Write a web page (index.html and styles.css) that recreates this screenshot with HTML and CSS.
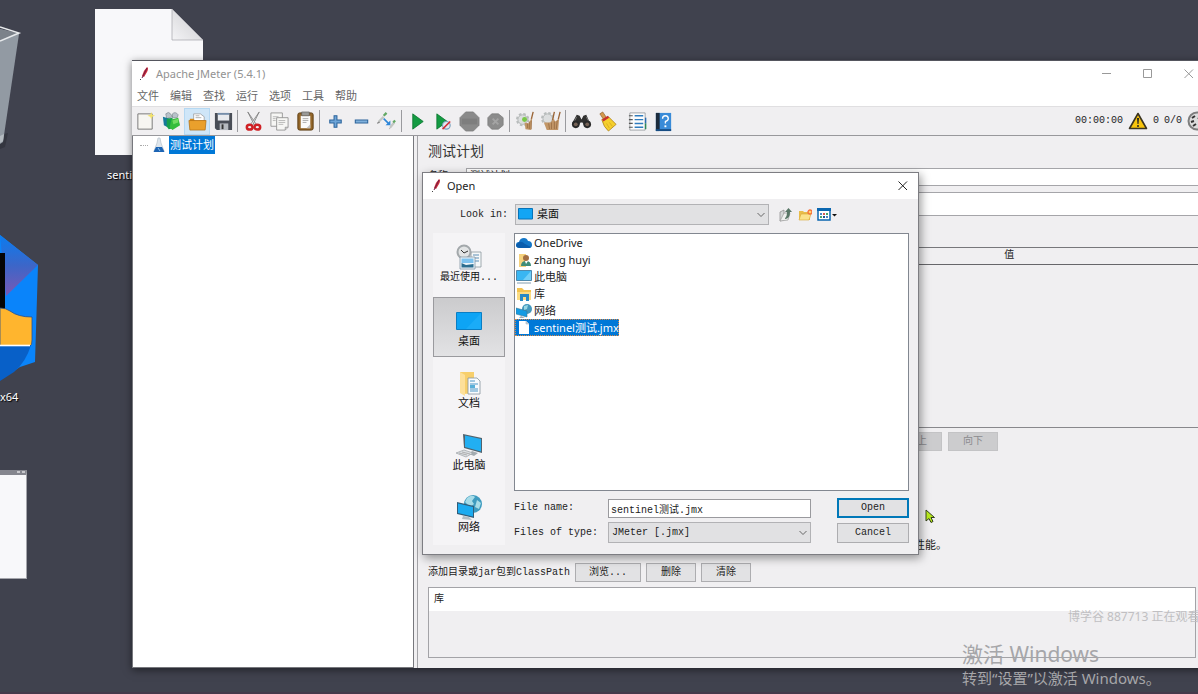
FILE: index.html
```html
<!DOCTYPE html>
<html lang="zh-CN">
<head>
    <meta charset="UTF-8">
    <meta name="viewport" content="width=device-width, initial-scale=1.0">
    <title>Apache JMeter (5.4.1)</title>
    <link rel="stylesheet" href="styles.css">
</head>
<body>
    <div class="desktop">
        <!-- Desktop icons -->
        <svg class="desk-bin" width="24" height="125" viewBox="0 0 24 125">
            <path d="M0 110L8 108 5 122 0 124Z" fill="#343640"/>
            <path d="M0 4L19 9 3 117 0 119Z" fill="#929aa3"/>
            <path d="M0 4L18 8 0 16Z" fill="#7c828a"/>
            <path d="M0 2L19 8 0 16" fill="none" stroke="#e8eaec" stroke-width="1.5"/>
            <path d="M0 111L4 109 3 116 0 118Z" fill="#b4bac0"/>
        </svg>
        <div class="desk-file">
            <svg width="108" height="146" viewBox="0 0 108 146">
                <defs>
                    <linearGradient id="fold" x1="0" y1="1" x2="1" y2="0"><stop offset="0" stop-color="#f4f4f6"/><stop offset="1" stop-color="#c9c9cd"/></linearGradient>
                </defs>
                <path d="M0 0H77L108 31V146H0Z" fill="#f8f8fa"/>
                <path d="M77 0L108 31H77Z" fill="url(#fold)" stroke="#a5a5aa" stroke-width=".7"/>
            </svg>
            <span class="desk-label">sentinel测试.jmx</span>
        </div>
        <div class="desk-app">
            <svg width="40" height="150" viewBox="0 0 40 150">
                <defs>
                    <linearGradient id="facet" x1="0" y1="0" x2="0" y2="1"><stop offset="0" stop-color="#0a7cf0"/><stop offset=".5" stop-color="#3c66c8"/><stop offset="1" stop-color="#7a58b4"/></linearGradient>
                </defs>
                <path d="M0 3L38 33 35 130 20 135 0 148Z" fill="#0a84fa"/>
                <path d="M0 3L38 33 6 64Z" fill="url(#facet)"/>
                <path d="M0 21H5V80H0Z" fill="#050505"/>
                <path d="M0 76Q6 76 10 79 18 85 32 85V108Q32 114 30 114H0Z" fill="#ffb52e" stroke="#28508c" stroke-width=".8"/>
                <path d="M0 113H31Q26 130 14 140L0 149Z" fill="#0860c8"/>
                <path d="M0 113.500H30" stroke="#fff" stroke-width="1.6"/>
            </svg>
            <span class="desk-label">x64</span>
        </div>
        <div class="desk-thumb"><span></span></div>

        <!-- Main window -->
        <main class="window">
            <header class="titlebar">
                <svg class="feather" width="12" height="14" viewBox="0 0 12 14"><path d="M9 0Q11 1 9 5L6 10 4 9Q5 4 9 0Z" fill="#d02c38"/><path d="M9 1L4 11" stroke="#6a1e48" stroke-width="1"/><path d="M3 12L2 13" stroke="#444"/></svg>
                <h1>Apache JMeter (5.4.1)</h1>
                <div class="controls">
                    <button aria-label="最小化"><svg width="10" height="10" viewBox="0 0 10 10"><path d="M0 4.500H9"/></svg></button>
                    <button aria-label="最大化"><svg width="10" height="10" viewBox="0 0 10 10"><path d="M.5 .5H8.500V8.500H.5Z"/></svg></button>
                    <button aria-label="关闭"><svg width="10" height="10" viewBox="0 0 10 10"><path d="M.5 .5L9 9M9 .5L.5 9"/></svg></button>
                </div>
            </header>
            <nav class="menubar">
                <button>文件</button>
                <button>编辑</button>
                <button>查找</button>
                <button>运行</button>
                <button>选项</button>
                <button>工具</button>
                <button>帮助</button>
            </nav>

            <div class="toolbar">
                <button class="tool" aria-label="新建"><svg viewBox="0 0 22 22"><path d="M3 3H18V19H3Z" fill="#f7f6f2" stroke="#777"/><path d="M17 1L18 4 21 5 18 6 17 9 16 6 13 5 16 4Z" fill="#f3e26a"/></svg></button>
                <button class="tool" aria-label="模板"><svg viewBox="0 0 22 22"><path d="M5 3Q8 0 10 3L12 6 6 8ZM12 3Q15 0 18 4L17 7 12 7Z" fill="#b8c2ca" stroke="#7f8a92" stroke-width=".7"/><path d="M2 6L9 8V18L3 15Z" fill="#16799a"/><path d="M6 8L12 7 13 18 8 19 6 16Z" fill="#18a04a"/><path d="M11 9L18 7 20 15 12 20 9 17Z" fill="#35bd3c"/><path d="M12 10L18 8 18 12 13 14Z" fill="#72dc62"/></svg></button>
                <button class="tool active" aria-label="打开"><svg viewBox="0 0 22 22"><path d="M7 9V3H14L18 6V12H7Z" fill="#fff" stroke="#8d8d8d" stroke-width=".7"/><path d="M9 5H13M9 7H15" stroke="#999" stroke-width=".8"/><path d="M3 8H7L8 10H19V19H3Z" fill="#d98a18"/><path d="M2 10H20L19 20H3Z" fill="#eaa02c" stroke="#ac6a10" stroke-width=".7"/></svg></button>
                <button class="tool" aria-label="保存"><svg viewBox="0 0 22 22"><path d="M2 2H20V20H4L2 18Z" fill="#494d56"/><path d="M5 2H17V10H5Z" fill="#e8eaee"/><path d="M5 2H17V4H5Z" fill="#768eaa"/><path d="M7 13H16V20H7Z" fill="#b6bac0"/><path d="M9 14H11V19H9Z" fill="#333"/></svg></button>
                <i class="sep"></i>
                <button class="tool" aria-label="剪切"><svg viewBox="0 0 22 22"><path d="M5 1L14 14 12 15Z" fill="#e3e5e7" stroke="#777" stroke-width=".8"/><path d="M17 1L8 14 10 15Z" fill="#f0f1f2" stroke="#777" stroke-width=".8"/><g fill="none" stroke="#cf2025" stroke-width="2.6"><ellipse cx="7" cy="17" rx="3" ry="2.5"/><ellipse cx="15" cy="17" rx="3" ry="2.5"/></g></svg></button>
                <button class="tool" aria-label="复制"><svg viewBox="0 0 22 22"><g fill="#f6f6f4" stroke="#909090" stroke-width=".9"><path d="M2 2H14V16H2Z"/><path d="M8 7H20V17L17 20H8Z"/></g><path d="M4 6H10M4 8H7M4 10H7M10 10H17M10 12H17M10 14H15" stroke="#aaa" stroke-width=".8"/><path d="M20 17H17V20" fill="#ccc" stroke="#888" stroke-width=".7"/></svg></button>
                <button class="tool" aria-label="粘贴"><svg viewBox="0 0 22 22"><rect x="3" y="2" width="16" height="18" rx="2" fill="#94672a" stroke="#5b3b10"/><path d="M6 5H16V18H6Z" fill="#fafafa"/><path d="M7 1H15V5H7Z" fill="#9a9a98" stroke="#555" stroke-width=".6"/><path d="M8 8H14M8 10H14M8 12H12" stroke="#999" stroke-width=".8"/><path d="M16 14V18H12Z" fill="#c0c0c0"/></svg></button>
                <i class="sep"></i>
                <button class="tool" aria-label="展开"><svg viewBox="0 0 22 22"><path d="M9.5 5H12.5V9.5H17V12.5H12.5V17H9.5V12.5H5V9.5H9.500Z" fill="#6ea5d8" stroke="#2c649c" stroke-width="1.1"/></svg></button>
                <button class="tool" aria-label="折叠"><svg viewBox="0 0 22 22"><path d="M4.5 9.5H17.5V12.5H4.5Z" fill="#7fb0dc" stroke="#2c649c" stroke-width="1.1"/></svg></button>
                <button class="tool" aria-label="切换"><svg viewBox="0 0 22 22"><path d="M2 11L7 6M14 17L18 12" stroke="#c3c7c4" stroke-width="2.4"/><path d="M7 5L10 2M17 12L19 10" stroke="#62a864" stroke-width="2.4"/><path d="M2 11L0 13 3 12M14 17L13 19" stroke="#aaa"/><path d="M7 8L12 13" stroke="#2f86d8" stroke-width="1.6"/><path d="M14 10V15H9Z" fill="#2f86d8"/></svg></button>
                <i class="sep"></i>
                <button class="tool" aria-label="启动"><svg viewBox="0 0 22 22"><path d="M6 3L17 11 6 19Z" fill="#149b43" stroke="#08742d" stroke-width=".8"/></svg></button>
                <button class="tool" aria-label="不停顿开始"><svg viewBox="0 0 22 22"><path d="M4 3L15 11 4 19Z" fill="#149b43" stroke="#08742d" stroke-width=".8"/><circle cx="14" cy="15" r="4" fill="#e1eaf1" stroke="#7aa0bd" stroke-width="1.2"/><path d="M10 19L18 11" stroke="#d32d35" stroke-width="1.6"/></svg></button>
                <button class="tool" aria-label="停止"><svg viewBox="0 0 22 22"><path d="M7 1H15L21 7V15L15 21H7L1 15V7Z" fill="#8a8a8a" stroke="#7c7c7c" stroke-width=".8"/><path d="M3 8H19V14H3Z" fill="#7e7e7e"/></svg></button>
                <button class="tool" aria-label="关闭"><svg viewBox="0 0 22 22"><path d="M7 3H14L19 7V15L14 19H7L3 15V7Z" fill="#8c8c8c" stroke="#7c7c7c" stroke-width=".8"/><path d="M8 8L14 14M14 8L8 14" stroke="#a4a4a4" stroke-width="2"/></svg></button>
                <i class="sep"></i>
                <button class="tool" aria-label="清除"><svg viewBox="0 0 22 22"><circle cx="8" cy="9" r="5" fill="#dcdedf" stroke="#b0b4b4" stroke-width="1"/><circle cx="8" cy="9" r="6" fill="none" stroke="#b8bcbc" stroke-width="2" stroke-dasharray="2.7 2"/><circle cx="10" cy="9" r="2.6" fill="#79c747"/><path d="M19 1L17 9" stroke="#9a6436" stroke-width="1.4"/><path d="M10 12L14 13 18 7 17 20 11 19Z" fill="#c29667"/><path d="M13 13V18M15 11V19M17 10V19" stroke="#8e633b" stroke-width=".7"/></svg></button>
                <button class="tool" aria-label="清除全部"><svg viewBox="0 0 22 22"><circle cx="7" cy="8" r="5" fill="#dcdedf" stroke="#b0b4b4" stroke-width="1"/><circle cx="7" cy="8" r="6" fill="none" stroke="#b8bcbc" stroke-width="2" stroke-dasharray="2.7 2"/><path d="M14 1L12 10M20 1L18 9" stroke="#9a6436" stroke-width="1.4"/><path d="M3 12L10 12 13 8 15 11 19 8 18 20H6Z" fill="#c29667"/><path d="M8 13L9 19M11 12V19M14 11V19M17 10L16 19" stroke="#8e633b" stroke-width=".7"/></svg></button>
                <i class="sep"></i>
                <button class="tool" aria-label="查找"><svg viewBox="0 0 22 22"><path d="M6 4L9 5 11 9 13 5 16 4 20 13 15 17 12 12H10L7 17 1 13Z" fill="#30302f"/><circle cx="5" cy="14" r="4" fill="#292929"/><circle cx="17" cy="14" r="4" fill="#292929"/><circle cx="5" cy="14" r="2" fill="#756256"/><circle cx="17" cy="14" r="2" fill="#756256"/><path d="M6 6L4 10M16 6L18 10" stroke="#777"/></svg></button>
                <button class="tool" aria-label="重置查找"><svg viewBox="0 0 22 22"><path d="M3 3L6 1 10 7 7 9Z" fill="#d59a4d" stroke="#8e5b24" stroke-width=".7"/><path d="M5 9L12 6 20 14 12 21Q7 17 5 9Z" fill="#f5cf2d" stroke="#aa7d16" stroke-width=".8"/><path d="M6 10L12 6" stroke="#c8302c" stroke-width="2.5"/><path d="M10 13L13 18M13 12L16 16" stroke="#d2a522" stroke-width=".8"/></svg></button>
                <i class="sep blank"></i>
                <button class="tool" aria-label="函数助手"><svg viewBox="0 0 22 22"><path d="M3 2H19V20H3Z" fill="#fcfcfc" stroke="#8a8f93" stroke-width=".8"/><path d="M2 5H6M2 9H6M2 13H6M2 17H6" stroke="#555" stroke-width="1.2"/><path d="M8 5H17M8 9H17M8 13H17M8 17H17" stroke="#2f7cbe" stroke-width="1.5"/><path d="M19.5 7V13" stroke="#2b6cb0" stroke-width="1.5"/><path d="M19.5 13V19" stroke="#2d8a58" stroke-width="1.5"/></svg></button>
                <button class="tool" aria-label="帮助"><svg viewBox="0 0 22 22"><path d="M3 2H19V21H3Z" fill="#3a8bd8"/><path d="M3 2H7V21H3Z" fill="#1c2b3c"/><path d="M3 19H19V21H3Z" fill="#174c83"/><path d="M10 8Q10 5 13 5 16 5 16 8 16 10 13 11V13" fill="none" stroke="#fff" stroke-width="1.4"/><path d="M12 15H14V17H12Z" fill="#fff"/></svg></button>
                <div class="status">
                    <span>00:00:00</span>
                    <svg width="20" height="18" viewBox="0 0 20 18"><path d="M10 1.500L18.500 16.500H1.500Z" fill="#f8c40c" stroke="#3b3420" stroke-width="1.6" stroke-linejoin="round"/><path d="M9 6H11L10.500 12H9.500Z" fill="#222"/><circle cx="10" cy="14" r="1" fill="#222"/></svg>
                    <span>0</span>
                    <span>0/0</span>
                    <svg width="20" height="20" viewBox="0 0 20 20"><circle cx="10" cy="10" r="8.5" fill="#dcdcdc" stroke="#7e7e7e" stroke-width="2"/><path d="M5 7L8 5M4 11L7 10M6 15L9 13M13 6L11 8" stroke="#333" stroke-width="2"/></svg>
                </div>
            </div>

            <div class="workspace">
                <aside class="tree">
                    <div class="tree-node">
                        <i class="tree-line"></i>
                        <svg width="12" height="16" viewBox="0 0 12 16"><path d="M5 1H7L8 6 11 14H1L4 6Z" fill="#dfe6ec" stroke="#b7c2cb" stroke-width=".7"/><path d="M3 10H9L11.500 15H.5Z" fill="#1c64b4"/><path d="M5 11L7 14" stroke="#8fc4ee"/></svg>
                        <span>测试计划</span>
                    </div>
                </aside>
                <section class="panel">
                    <h2>测试计划</h2>
                    <div class="field">
                        <label for="plan-name">名称:</label>
                        <input type="text" id="plan-name" value="测试计划">
                    </div>
                    <div class="field comment">
                        <label for="plan-comment">注释:</label>
                        <input type="text" id="plan-comment">
                    </div>
                    <table class="vars">
                        <thead><tr><th>名称:</th><th>值</th></tr></thead>
                        <tbody><tr><td></td><td></td></tr></tbody>
                    </table>
                    <div class="panel-lower">
                        <div class="row-buttons">
                            <button class="btn" disabled>详细</button>
                            <button class="btn">添加</button>
                            <button class="btn wide">从剪贴板添加</button>
                            <button class="btn" disabled>删除</button>
                            <button class="btn" disabled>向上</button>
                            <button class="btn" disabled>向下</button>
                        </div>
                        <p class="hint">才需要选择函数测试模式。选择这个选项很影响性能。</p>
                        <div class="classpath">
                            <span>添加目录或jar包到ClassPath</span>
                            <button class="btn browse">浏览...</button>
                            <button class="btn">删除</button>
                            <button class="btn">清除</button>
                        </div>
                        <div class="library">
                            <table><thead><tr><th>库</th></tr></thead></table>
                        </div>
                    </div>
                </section>
            </div>
        </main>

        <!-- Open file dialog -->
        <div class="dialog" role="dialog" aria-labelledby="dialog-title">
            <header class="dialog-title">
                <svg class="feather" width="12" height="14" viewBox="0 0 12 14"><path d="M9 0Q11 1 9 5L6 10 4 9Q5 4 9 0Z" fill="#d02c38"/><path d="M9 1L4 11" stroke="#6a1e48" stroke-width="1"/><path d="M3 12L2 13" stroke="#444"/></svg>
                <h2 id="dialog-title">Open</h2>
                <button aria-label="Close"><svg width="10" height="10" viewBox="0 0 10 10"><path d="M.5 .5L9 9M9 .5L.5 9"/></svg></button>
            </header>
            <div class="dialog-body">
                <div class="look-in">
                    <label for="look-in">Look in:</label>
                    <div class="combo with-icon">
                        <svg class="combo-icon" width="15" height="12" viewBox="0 0 15 12"><path d="M.5 .5H14.500V11H.5Z" fill="#12a5f4" stroke="#0873b8"/></svg>
                        <select id="look-in"><option>桌面</option></select>
                        <svg class="chevron" width="8" height="6" viewBox="0 0 8 6"><path d="M.5 1L4 4.500 7.500 1"/></svg>
                    </div>
                    <button aria-label="Up One Level"><svg width="14" height="14" viewBox="0 0 14 14"><path d="M1 4L5 2V12L1 13Z" fill="#d5d8d8" stroke="#888" stroke-width=".7"/><path d="M5 5H11L9 12L1 13Z" fill="#eef0ee" stroke="#999" stroke-width=".7"/><path d="M6 10Q8 9 8 4H6L9.500 0 13 4H11Q11 11 6 11Z" fill="#587666"/></svg></button>
                    <button aria-label="New Folder"><svg width="14" height="14" viewBox="0 0 14 14"><path d="M1 3H5L6 4H12V12H1Z" fill="#e9bd4b"/><path d="M3 6H13L11 12H1Z" fill="#fbe28b" stroke="#d9a836" stroke-width=".6"/><circle cx="12" cy="4" r="2" fill="#ffd36c" stroke="#f6713c" stroke-width="1.3"/></svg></button>
                    <button class="views" aria-label="View Menu"><svg width="20" height="14" viewBox="0 0 20 14"><path d="M1 1H13V12H1Z" fill="#fff" stroke="#0b67b0" stroke-width="1.5"/><path d="M0 0H14V3H0Z" fill="#0b67b0"/><path d="M3 5H5V7H3ZM9 8H11V10H9Z" fill="#4f86c6"/><path d="M6 5H8V7H6Z" fill="#d65a50"/><path d="M9 5H11V7H9ZM3 8H5V10H3Z" fill="#48a365"/><path d="M6 8H8V10H6Z" fill="#22518e"/><path d="M15 6H20L17.500 8.500Z" fill="#111"/></svg></button>
                </div>

                <div class="browser">
                    <div class="places">
                        <button class="place">
                            <svg width="30" height="28" viewBox="0 0 30 28"><path d="M17 9H27V24H17Z" fill="#f6f8f9" stroke="#8b989f" stroke-width=".8"/><path d="M19 12H25M21 15H25M21 18H25" stroke="#5c8eb5"/><circle cx="10" cy="9" r="6.5" fill="#e2e4e5" stroke="#a3a8ab" stroke-width="2"/><path d="M7 7L10 10 14 8" fill="none" stroke="#333"/><path d="M6 14H21V26H6Z" fill="#eef5fa" stroke="#8296a5" stroke-width=".8"/><path d="M7.500 15.500H19.500V20H7.500Z" fill="#7ec2ee"/><path d="M7.500 20L12 22 19.500 21V24.500H7.500Z" fill="#2c6e90"/></svg>
                            <span>最近使用...</span>
                        </button>
                        <button class="place selected">
                            <svg width="30" height="28" viewBox="0 0 30 28"><path d="M2.500 5.500H27.500V22.500H2.500Z" fill="#0da4f5" stroke="#0a7ec4"/><path d="M27 6L12 22H27Z" fill="#1aacf8"/></svg>
                            <span>桌面</span>
                        </button>
                        <button class="place">
                            <svg width="30" height="28" viewBox="0 0 30 28"><path d="M6 3H20V24L10 25 6 22Z" fill="#f7cf6c"/><path d="M6 3L11 6V27L6 24Z" fill="#fde09a"/><path d="M14 9H23L26 12V25H14Z" fill="#f8fbfd" stroke="#8795a0" stroke-width=".8"/><path d="M16 12H21M16 15H24M16 20H24M16 22H24" stroke="#4c97c6"/><path d="M16 16H21V19H16Z" fill="#59b0d8"/></svg>
                            <span>文档</span>
                        </button>
                        <button class="place">
                            <svg width="30" height="28" viewBox="0 0 30 28"><path d="M9 3L28 7V22L10 17Z" fill="#52626d"/><path d="M11 4.500L27 8V20.500L11 16Z" fill="#22aff2"/><path d="M18 20L24 22 20 25 15 23Z" fill="#a3abb0"/><path d="M2 22L10 19 19 22 12 26Z" fill="#dce0e3" stroke="#9ba1a5" stroke-width=".7"/><path d="M5 22L13 24M8 21L16 23" stroke="#999" stroke-width=".7"/></svg>
                            <span>此电脑</span>
                        </button>
                        <button class="place">
                            <svg width="30" height="28" viewBox="0 0 30 28"><circle cx="19" cy="11" r="9" fill="#3e9bbf"/><path d="M13 5Q18 1 21 4L18 8 20 11 16 14 11 9ZM23 7L27 10 25 16 21 14Z" fill="#a7dce8"/><path d="M3 9L20 13V25L3 21Z" fill="#315d79"/><path d="M4 10.500L19 14V23.500L4 20Z" fill="#1cabf0"/><path d="M9 23L15 24 18 27 8 26Z" fill="#b4bec4"/></svg>
                            <span>网络</span>
                        </button>
                    </div>

                    <div class="dialog-main">
                        <ul class="files" role="listbox">
                            <li role="option"><svg viewBox="0 0 16 16"><path d="M4 13Q0 13 0 10 0 7 3 7 4 3 8 3 11 3 12 6 16 6 16 10 16 13 13 13Z" fill="#1477c8"/><path d="M3 7Q6 6 9 9L15 12Q14 13 13 13H4Q0 13 0 10Z" fill="#0a5dad"/></svg><span>OneDrive</span></li>
                            <li role="option"><svg viewBox="0 0 16 16"><path d="M3 2H10V15H3Z" fill="#f6d27d"/><circle cx="10" cy="6" r="3" fill="#a26e43"/><path d="M5 14Q5 9 10 9 15 9 15 14Z" fill="#3f8d78"/><path d="M9 9L10 12 12 9" fill="#fff"/></svg><span>zhang huyi</span></li>
                            <li role="option"><svg viewBox="0 0 16 16"><path d="M.5 1.500H15.500V11.500H.5Z" fill="#39b6f2" stroke="#4f89ad"/><path d="M15 2L7 11H15Z" fill="#71cff8"/><path d="M1 14H15" stroke="#819caf"/></svg><span>此电脑</span></li>
                            <li role="option"><svg viewBox="0 0 16 16"><path d="M1 2H6L8 4H15V13H1Z" fill="#f3c34f"/><path d="M1 6H15V14H1Z" fill="#fbdc83"/><path d="M4 8H13V15H10V11H7V15H4Z" fill="#2789c4"/></svg><span>库</span></li>
                            <li role="option"><svg viewBox="0 0 16 16"><circle cx="11" cy="6" r="5" fill="#4498bd"/><path d="M8 3L12 2 11 6 8 7Z" fill="#99d7e5"/><path d="M0 5L11 8V14L0 11Z" fill="#149be3" stroke="#397897" stroke-width=".6"/><path d="M5 13L9 15H3Z" fill="#9ca9b0"/></svg><span>网络</span></li>
                            <li role="option" class="selected" aria-selected="true"><svg viewBox="0 0 16 16"><path d="M3 1H10L13 4V14H3Z" fill="#fff"/><path d="M10 1V4H13" fill="#ccc" stroke="#9cb7cc" stroke-width=".6"/></svg><span>sentinel测试.jmx</span></li>
                        </ul>
                        <div class="file-form">
                            <label for="file-name">File name:</label>
                            <input type="text" id="file-name" value="sentinel测试.jmx">
                            <button class="btn primary">Open</button>
                            <label for="file-type">Files of type:</label>
                            <div class="combo">
                                <select id="file-type"><option>JMeter [.jmx]</option></select>
                                <svg class="chevron" width="8" height="6" viewBox="0 0 8 6"><path d="M.5 1L4 4.500 7.500 1"/></svg>
                            </div>
                            <button class="btn">Cancel</button>
                        </div>
                    </div>
                </div>
            </div>
        </div>

        <div class="viewer-mark">博学谷 887713 正在观看</div>
        <div class="activate">
            <strong>激活 Windows</strong>
            <span>转到“设置”以激活 Windows。</span>
        </div>
        <svg class="cursor" width="11" height="15" viewBox="0 0 11 15"><path d="M1 1L9.500 8.500H6L8 12.500 6 13.500 4 9.500 1 12Z" fill="#b5e61d" stroke="#33401c" stroke-width="1"/></svg>
    </div>
</body>
</html>
```
FILE: styles.css
```css
* {
    box-sizing: border-box;
}
body {
    margin: 0;
    font-family: "Noto Sans", "Noto Sans CJK SC", sans-serif;
    font-size: 11px;
    line-height: 16px;
    color: #222;
}
h1, h2, p, ul {
    margin: 0;
    padding: 0;
    font-weight: normal;
}
button, input, select {
    font: inherit;
    color: inherit;
    margin: 0;
    padding: 0;
}
button {
    border: none;
    background: none;
}
svg {
    display: block;
    flex: none;
}
.desktop {
    position: relative;
    height: 100vh;
    overflow: hidden;
    background-color: #40424e;
    border-bottom: 2px solid #45394b;
}

/* desktop icons */
.desk-bin {
    position: absolute;
    left: 0;
    top: 25px;
}
.desk-file {
    position: absolute;
    left: 95px;
    top: 9px;
}
.desk-app {
    position: absolute;
    left: 0;
    top: 232px;
}
.desk-label {
    display: block;
    color: white;
    text-shadow: 1px 1px 1px #000;
    white-space: nowrap;
}
.desk-file .desk-label {
    margin: 12px 0 0 12px;
}
.desk-app .desk-label {
    margin-top: 7px;
}
.desk-thumb {
    position: absolute;
    left: -60px;
    top: 470px;
    width: 87px;
    height: 109px;
    background-color: #f8f8fa;
    border: 1px solid #a4a5ab;
    border-top: 5px solid #85868e;
}
.desk-thumb span {
    position: absolute;
    right: 1px;
    top: -4px;
    width: 8px;
    height: 2px;
    border-left: 3px solid #c8c8cc;
    border-right: 3px solid #c8c8cc;
}

/* main window */
.window {
    position: absolute;
    left: 132px;
    right: -11px;
    top: 60px;
    bottom: 24px;
    display: flex;
    flex-direction: column;
    background-color: #f0eff1;
    border-top: 1px solid #55565e;
    box-shadow: 0 2px 8px rgba(0,0,0,0.5);
}
.titlebar {
    display: flex;
    align-items: center;
    height: 26px;
    padding-left: 6px;
    background-color: white;
    color: #929292;
}
.titlebar h1 {
    margin-left: 6px;
    font-size: 11px;
}
.controls {
    display: flex;
    margin-left: auto;
}
.controls button {
    display: flex;
    justify-content: center;
    width: 41px;
}
.controls svg, .dialog-title button svg {
    fill: none;
    stroke: #999;
}
.menubar {
    display: flex;
    gap: 11px;
    height: 19px;
    padding-left: 5px;
    background-color: white;
    color: #666;
}
.menubar button {
    height: 18px;
}
.toolbar {
    display: flex;
    align-items: center;
    height: 30px;
    border-top: 1px solid #e0dfe1;
    border-bottom: 1px solid #98989c;
}
.tool {
    display: flex;
    align-items: center;
    justify-content: center;
    width: 26px;
    height: 27px;
}
.tool svg {
    width: 21px;
    height: 21px;
}
.tool.active {
    background-color: #cfe6f8;
    border: 1px solid #b5d8f2;
}
.sep {
    width: 1px;
    height: 22px;
    margin: 0 2px 0 1px;
    background-color: #9a9a9e;
}
.sep.blank {
    background: none;
}
.status {
    display: flex;
    align-items: center;
    gap: 5px;
    margin-left: auto;
    padding-right: 2px;
    font-family: "Liberation Mono", monospace;
    font-size: 10px;
}
.workspace {
    flex: 1;
    display: flex;
    gap: 3px;
    min-height: 0;
}
.tree {
    width: 282px;
    background-color: white;
    border: 1px solid #77787d;
    border-top: none;
}
.tree-node {
    display: flex;
    align-items: center;
    padding-left: 7px;
}
.tree-line {
    width: 8px;
    margin-right: 5px;
    border-top: 1px dotted #aaa;
}
.tree-node span {
    margin-left: 4px;
    padding: 0 1px;
    line-height: 18px;
    background-color: #0078d7;
    color: white;
}

/* test plan panel */
.panel {
    flex: 1;
    display: flex;
    flex-direction: column;
    padding: 8px 6px 10px 10px;
    border-left: 1px solid #a3a3a7;
    font-family: "Liberation Mono", "Noto Sans CJK SC", monospace;
    font-size: 10px;
    min-width: 0;
}
.panel h2 {
    margin-bottom: 8px;
    font-size: 14px;
    color: #333;
}
.field {
    display: flex;
    align-items: center;
    height: 18px;
    margin-bottom: 6px;
}
.field label {
    width: 38px;
}
.field input {
    flex: 1;
    align-self: stretch;
    padding: 0 3px;
    border: 1px solid #a5a5a9;
    background-color: white;
}
.field.comment {
    height: 24px;
    margin-bottom: 31px;
}
.vars {
    width: 100%;
    height: 181px;
    border-collapse: collapse;
    table-layout: fixed;
    border-bottom: 1px solid #88888c;
}
.vars th {
    height: 17px;
    padding: 0;
    line-height: 14px;
    font-weight: normal;
    border-top: 1px solid #77777b;
    border-bottom: 1px solid #66666a;
}
.vars td {
    padding: 0;
}
.panel-lower {
    flex: 1;
    display: flex;
    flex-direction: column;
    padding-right: 7px;
}
.row-buttons {
    display: flex;
    justify-content: center;
    gap: 6px;
    margin-top: 4px;
}
.btn {
    width: 50px;
    height: 19px;
    background-color: #e2e2e4;
    border: 1px solid #adadb0;
    line-height: 14px;
    color: #222;
}
.btn:disabled {
    background-color: #ccccce;
    border-color: #c3c3c5;
    color: #8b8b8f;
}
.btn.wide {
    width: 92px;
}
.btn.browse {
    width: 66px;
}
.hint {
    margin-top: 87px;
    padding-left: 6px;
    text-align: center;
    font-size: 11px;
}
.classpath {
    display: flex;
    align-items: center;
    gap: 5px;
    margin: 9px 0 5px;
}
.library {
    flex: 1;
    border: 1px solid #a3a3a7;
}
.library table {
    width: 100%;
    border-collapse: collapse;
    background-color: white;
}
.library th {
    height: 23px;
    padding: 0 5px;
    text-align: left;
    font-weight: normal;
}

/* open dialog */
.dialog {
    position: absolute;
    left: 422px;
    top: 172px;
    width: 497px;
    background-color: #f0eff1;
    border: 1px solid #7d7d82;
    box-shadow: 2px 3px 9px rgba(0,0,0,0.4);
}
.dialog-title {
    display: flex;
    align-items: center;
    height: 26px;
    padding: 0 10px 0 7px;
    background-color: white;
}
.dialog-title h2 {
    margin-left: 5px;
    font-size: 11px;
}
.dialog-title button {
    margin-left: auto;
}
.dialog-title button svg {
    stroke: #222;
}
.dialog-body {
    padding: 5px 9px 9px 10px;
    font-family: "Liberation Mono", "Noto Sans CJK SC", monospace;
    font-size: 10px;
}
.look-in {
    display: flex;
    align-items: center;
    gap: 5px;
    height: 21px;
    margin-bottom: 8px;
}
.look-in label {
    width: 77px;
    padding-right: 2px;
    text-align: right;
}
.look-in .combo {
    width: 254px;
    margin-right: 5px;
}
.combo {
    position: relative;
    height: 21px;
}
.combo select {
    appearance: none;
    width: 100%;
    height: 100%;
    padding: 0 3px;
    background-color: #e1e1e3;
    border: 1px solid #b2b2b5;
    border-radius: 0;
}
.with-icon select {
    padding-left: 21px;
    font-size: 11px;
    color: #111;
}
.combo-icon {
    position: absolute;
    left: 3px;
    top: 4px;
}
.chevron {
    position: absolute;
    right: 4px;
    top: 8px;
    fill: none;
    stroke: #666;
}
.browser {
    display: flex;
    gap: 9px;
}
.places {
    width: 72px;
    background-color: #f5f4f6;
}
.place {
    display: flex;
    flex-direction: column;
    align-items: center;
    width: 72px;
    height: 60px;
    margin-bottom: 2px;
    padding-top: 10px;
    font-size: 11px;
    line-height: 14px;
    color: #111;
}
.place:first-child {
    height: 62px;
    font-size: 10px;
}
.place.selected {
    background: linear-gradient(#cbcbcd, #e2e2e4);
    border: 1px solid #9a9a9e;
    padding-top: 9px;
}
.dialog-main {
    flex: 1;
    min-width: 0;
}
.files {
    height: 258px;
    list-style: none;
    background-color: white;
    border: 1px solid #828790;
    font-family: "Noto Sans", "Noto Sans CJK SC", sans-serif;
    font-size: 11px;
}
.files li {
    display: flex;
    align-items: center;
    gap: 2px;
    width: fit-content;
    height: 17px;
    padding-left: 1px;
}
.files svg {
    width: 16px;
    height: 16px;
}
.files li.selected {
    background-color: #0078d7;
    color: white;
    outline: 1px dotted #d88a4a;
    outline-offset: -1px;
}
.file-form {
    display: grid;
    grid-template-columns: 94px 203px 1fr;
    align-items: center;
    row-gap: 4px;
    margin-top: 7px;
}
.file-form input {
    height: 19px;
    min-width: 0;
    padding: 0 2px;
    border: 1px solid #9a9a9e;
}
.file-form .btn {
    justify-self: end;
    width: 72px;
    height: 20px;
}
.file-form .btn.primary {
    border: 2px solid #0078b8;
}

/* overlays */
.viewer-mark {
    position: absolute;
    left: 1068px;
    top: 609px;
    font-size: 12px;
    color: #c0bfc2;
    white-space: nowrap;
}
.activate {
    position: absolute;
    left: 962px;
    top: 640px;
    color: #a6a6a9;
    white-space: nowrap;
}
.activate strong {
    display: block;
    font-size: 21px;
    font-weight: normal;
    line-height: 28px;
}
.activate span {
    display: block;
    font-size: 15px;
    line-height: 20px;
}
.cursor {
    position: absolute;
    left: 925px;
    top: 509px;
}
```
